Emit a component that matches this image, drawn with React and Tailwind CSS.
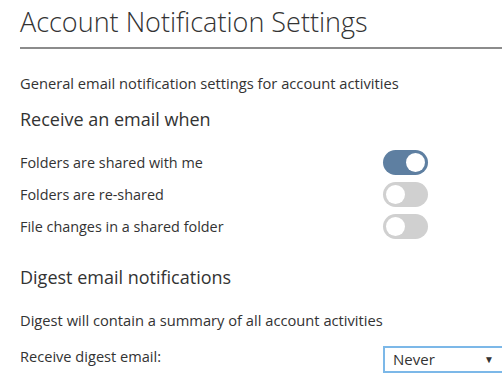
import { useState } from "react";

// Account notification settings: three toggles plus a digest frequency select.
const ROWS = [
  { id: "shared", label: "Folders are shared with me", on: true },
  { id: "reshared", label: "Folders are re-shared", on: false },
  { id: "changes", label: "File changes in a shared folder", on: false },
];

function Toggle({ on, onChange }) {
  return (
    <button
      onClick={onChange}
      className={`flex h-[25px] w-[45px] shrink-0 items-center rounded-full px-[3px] ${on ? "justify-end bg-[#5e7fa1]" : "justify-start bg-[#d0d0d0]"}`}
    >
      <span className="h-[19px] w-[19px] rounded-full bg-white" />
    </button>
  );
}

export default function App() {
  const [state, setState] = useState(Object.fromEntries(ROWS.map((r) => [r.id, r.on])));

  return (
    <div className="h-[390px] w-[502px] overflow-hidden bg-white pl-5 text-[#333] [font-family:'Open_Sans',sans-serif]">
      <h1 className="pt-[2px] text-[27px] font-light leading-[40px] text-[#333]">Account Notification Settings</h1>
      <div className="mt-[5px] h-[2px] bg-[#8c8c8c]" />

      <p className="mt-[24px] text-[14.7px] leading-[20px]">General email notification settings for account activities</p>
      <h2 className="mt-[13px] text-[18px] leading-[26px]">Receive an email when</h2>

      <div className="mt-[18px] flex flex-col gap-[7px]">
        {ROWS.map((r) => (
          <div key={r.id} className="flex h-[25px] items-center">
            <span className="w-[363px] shrink-0 text-[14.4px]">{r.label}</span>
            <Toggle on={state[r.id]} onChange={() => setState((s) => ({ ...s, [r.id]: !s[r.id] }))} />
          </div>
        ))}
      </div>

      <h2 className="mt-[25px] text-[18px] leading-[26px]">Digest email notifications</h2>
      <p className="mt-[20px] text-[14.7px] leading-[20px]">Digest will contain a summary of all account activities</p>

      <div className="mt-[16px] flex items-start">
        <span className="w-[363px] shrink-0 text-[14.6px] leading-[20px]">Receive digest email:</span>
        <div className="flex h-[27px] w-[122px] shrink-0 items-center border-2 border-[#7cb8e8] pl-[8px] pr-[9px]">
          <span className="flex-1 text-[15px]">Never</span>
          <span className="text-[10px]">▼</span>
        </div>
      </div>
    </div>
  );
}
